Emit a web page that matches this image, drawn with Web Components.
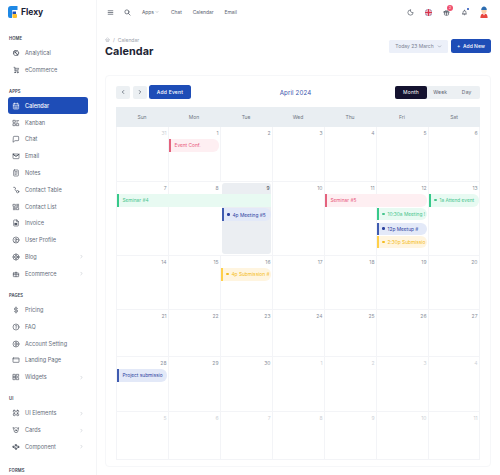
<!DOCTYPE html>
<html lang="en"><head><meta charset="utf-8"><title>Calendar</title>
<style>
html,body{margin:0;height:475px;overflow:hidden;background:#fff;font-family:Inter,"Noto Sans",sans-serif;color:#2a3547}
body{display:flex}
</style></head><body>
<app-sidebar></app-sidebar>
<app-main></app-main>
<script>
const I={
analytical:'<circle cx="12" cy="12" r="8"/><path d="M5 8c5 0 9 3 11 11M4 13c5-2 10-4 12-8M9 4.500c0 6 3 11 9 13"/>',
cart:'<path d="M6 4h3v11h10M9 7h11l-2 5H9"/><circle cx="9" cy="19" r="1.500"/><circle cx="17" cy="19" r="1.500"/>',
calendar:'<rect x="4" y="5" width="16" height="16" rx="2"/><path d="M16 3v4M8 3v4M4 11h16M8 15h8M8 18h8"/>',
kanban:'<path d="M4 4h6v6H4zM14 5l6 0M14 9h3M4 14h6v6H4zM14 14h6v6h-6z"/>',
chat:'<path d="M4 6a2 2 0 0 1 2-2h12a2 2 0 0 1 2 2v9a2 2 0 0 1-2 2H9l-5 4z"/>',
mail:'<rect x="3" y="6" width="18" height="14" rx="2"/><path d="M3 7l9 6 9-6" stroke-width="3"/>',
notes:'<rect x="5" y="3" width="14" height="18" rx="2"/><path d="M9 8h6M9 12h6M9 16h4"/>',
phone:'<path d="M5 4h4l2 5-2.500 1.500a11 11 0 0 0 5 5"/><circle cx="17" cy="17" r="3.500"/>',
list:'<path d="M4 4h6v6H4zM14 4h6M14 7h6M14 10h6M4 14h6M4 17h6M4 20h6M14 14h6v6h-6z"/>',
invoice:'<path d="M14 3H7a2 2 0 0 0-2 2v14a2 2 0 0 0 2 2h10a2 2 0 0 0 2-2V8z"/><path d="M14 3v5h5"/><path d="M9 13h6v4H9z" fill="currentColor"/>',
user:'<circle cx="12" cy="12" r="9"/><circle cx="12" cy="10.500" r="3"/><path d="M7 18.500c1-2.500 9-2.500 10 0"/>',
blog:'<circle cx="12" cy="12" r="9"/><circle cx="12" cy="12" r="4"/><path d="M3 12h5M16 12h5M12 3v5M12 16v5"/>',
bag:'<rect x="4" y="9" width="16" height="11" rx="1"/><path d="M4 14h16M12 9v11M9 9a3 3 0 1 1 6 0"/>',
dollar:'<path d="M17 8a3.500 3.500 0 0 0-3-2h-4a3 3 0 0 0 0 6h4a3 3 0 0 1 0 6h-4a3.500 3.500 0 0 1-3-2M12 3v18"/>',
faq:'<circle cx="12" cy="12" r="9"/><path d="M10 9a2.500 2.500 0 1 1 3.500 2.500c-1 .5-1.500 1-1.500 2.500M12 17v.01"/>',
account:'<circle cx="12" cy="12" r="9"/><circle cx="12" cy="12" r="3.500"/><path d="M12 5v3M12 16v3"/>',
landing:'<rect x="3" y="6" width="18" height="13" rx="1"/><path d="M3 9h18" stroke-width="1"/>',
widgets:'<path d="M4 4h6v16H4zM14 4h6v6h-6zM14 14h6v6h-6zM4 10h6M4 14h6"/>',
ui:'<rect x="4" y="4" width="6" height="6" rx="2"/><rect x="14" y="4" width="6" height="6" rx="2"/><rect x="4" y="14" width="6" height="6" rx="2"/><rect x="14" y="14" width="6" height="6" rx="2"/>',
cards:'<path d="M4 5l5 2 3-3 3 3 5-2-2 9a6 6 0 0 1-12 0z"/><circle cx="12" cy="13" r="2"/>',
component:'<path d="M12 4l3 3-3 3-3-3zM5 9l3 3-3 3-3-3zM19 9l3 3-3 3-3-3zM12 14l3 3-3 3-3-3z" fill="currentColor"/>',
menu:'<path d="M4 6h16M4 12h16M4 18h16"/>',
search:'<circle cx="10" cy="10" r="7"/><path d="M21 21l-6-6"/>',
moon:'<path d="M12 3a7 7 0 0 0 9 9 9 9 0 1 1-9-9"/>',
gift:'<rect x="3" y="9" width="18" height="4" rx="1"/><path d="M12 9v12M5 13v6a2 2 0 0 0 2 2h10a2 2 0 0 0 2-2v-6M8 9a2.500 2.500 0 1 1 4-3 2.500 2.500 0 1 1 4 3"/>',
bell:'<path d="M5 17h14a4 4 0 0 1-2-3v-3a5 5 0 0 0-10 0v3a4 4 0 0 1-2 3M10 17v1a2 2 0 0 0 4 0v-1M12 4v2"/>',
home:'<path d="M5 12H3l9-9 9 9h-2M5 12v7a2 2 0 0 0 2 2h10a2 2 0 0 0 2-2v-7"/><path d="M9 21v-6a2 2 0 0 1 2-2h2a2 2 0 0 1 2 2v6"/>',
right:'<path d="M9 6l6 6-6 6"/>',left:'<path d="M15 6l-6 6 6 6"/>',down:'<path d="M6 9l6 6 6-6"/>'
};
const svg=(n,s,w=1.8)=>`<svg width="${s}" height="${s}" viewBox="0 0 24 24" fill="none" stroke="currentColor" stroke-width="${w}" stroke-linecap="round" stroke-linejoin="round" style="display:block;flex:none">${I[n]}</svg>`;
class Base extends HTMLElement{
  connectedCallback(){ if(!this.shadowRoot){this.attachShadow({mode:'open'}).innerHTML=this.render();} }
}
customElements.define('nav-label',class extends Base{render(){return `<style>:host{display:flex;align-items:flex-end;height:19.400px;box-sizing:border-box;padding:0 0 2.500px 9px;font-size:4.200px;font-weight:600;letter-spacing:.1px;color:#3a4250;line-height:7px}</style><slot></slot>`}});
customElements.define('nav-item',class extends Base{render(){
  const ic=this.getAttribute('icon'),a=this.hasAttribute('active'),c=this.hasAttribute('chev');
  return `<style>:host{display:flex;align-items:center;height:16.800px;margin:0 8.500px 0 8px;border-radius:3px;padding:0 4px;box-sizing:border-box;font-size:5.600px;color:${a?'#fff':'#666e7a'};background:${a?'#1e4db7':'transparent'};font-weight:${a?500:400}}
  .i{width:8px;margin-right:5px;color:${a?'#fff':'#3f4754'};display:flex}.t{flex:1;white-space:nowrap}.c{color:#98a0ac}</style>
  <span class="i">${svg(ic,8)}</span><span class="t"><slot></slot></span>${c?`<span class="c">${svg('right',5)}</span>`:''}`}});
customElements.define('app-logo',class extends Base{render(){return `<style>:host{display:flex;align-items:center;gap:3px;height:25px;padding:0 0 2px 8px;box-sizing:border-box;font-size:8.500px;font-weight:700;color:#1a2236}</style>
  <svg width="10" height="12" viewBox="0 0 10 12"><path d="M0 3a3 3 0 0 1 3-3h6.500v4H5a1 1 0 0 0-1 1v7H2a2 2 0 0 1-2-2z" fill="#1e88e5"/><path d="M4.500 5.500H8v3H4.500z" fill="#1e4db7"/><rect x="4.500" y="8" width="4.500" height="4" rx="1" fill="#fbc02d"/></svg><slot></slot>`}});
customElements.define('app-sidebar',class extends Base{render(){
  const sec=[['HOME',[['analytical','Analytical'],['cart','eCommerce']]],
  ['APPS',[['calendar','Calendar',0,1],['kanban','Kanban'],['chat','Chat'],['mail','Email'],['notes','Notes'],['phone','Contact Table'],['list','Contact List'],['invoice','Invoice'],['user','User Profile'],['blog','Blog',1],['bag','Ecommerce',1]]],
  ['PAGES',[['dollar','Pricing'],['faq','FAQ'],['account','Account Setting'],['landing','Landing Page'],['widgets','Widgets',1]]],
  ['UI',[['ui','UI Elements',1],['cards','Cards',1],['component','Component',1]]],['FORMS',[]]];
  return `<style>:host{display:block;flex:none;width:96px;height:475px;overflow:hidden;background:#fff;border-right:1px solid #f4f5f7}nav-label:last-child{margin-top:2px}</style>
  <app-logo>Flexy</app-logo>`+sec.map(([l,it])=>`<nav-label>${l}</nav-label>`+it.map(([i,t,c,a])=>`<nav-item icon="${i}"${c?' chev':''}${a?' active':''}>${t}</nav-item>`).join('')).join('')}});
customElements.define('top-bar',class extends Base{render(){
  return `<style>:host{display:flex;align-items:center;height:26px;padding:0 12px 2px 10px;box-sizing:border-box;font-size:4.900px;color:#5a6270}
  .b{display:flex;color:#3a4250}.l{margin-right:11px;white-space:nowrap}.sp{flex:1}.r{position:relative;display:flex;color:#3a4250}
  .badge{position:absolute;top:-4px;right:-3px;width:6px;height:6px;border-radius:50%;background:#f0506e;color:#fff;font-size:3.500px;line-height:6px;text-align:center}
  .dot{position:absolute;top:-1px;right:-1px;width:2.500px;height:2.500px;border-radius:50%;background:#1e4db7}</style>
  <span class="b" style="margin-right:10px">${svg('menu',7,2.200)}</span><span class="b" style="margin-right:11px">${svg('search',7,2.200)}</span>
  <span class="l" style="display:flex;align-items:center;gap:1px;margin-right:12px">Apps ${svg('down',4)}</span><span class="l">Chat</span><span class="l">Calendar</span><span class="l">Email</span><span class="sp"></span>
  <span class="r" style="margin-right:11px">${svg('moon',7,2)}</span>
  <svg width="7" height="7" viewBox="0 0 14 14" style="margin-right:11px;display:block"><clipPath id="f"><circle cx="7" cy="7" r="7"/></clipPath><g clip-path="url(#f)"><rect width="14" height="14" fill="#3d4f8f"/><path d="M0 0l14 14M14 0L0 14" stroke="#fff" stroke-width="3"/><path d="M0 0l14 14M14 0L0 14" stroke="#d8324b" stroke-width="1.200"/><path d="M7 0v14M0 7h14" stroke="#fff" stroke-width="5"/><path d="M7 0v14M0 7h14" stroke="#d8324b" stroke-width="3"/></g></svg>
  <span class="r" style="margin-right:11px">${svg('gift',7,2)}<span class="badge">2</span></span>
  <span class="r" style="margin-right:12px">${svg('bell',7,2)}<span class="dot"></span></span>
  <svg width="8" height="12" viewBox="0 0 20 30" preserveAspectRatio="none" style="display:block"><path d="M1 30c0-9 4-11 9-11s9 2 9 11z" fill="#e8453c"/><path d="M7 19l3 5 3-5z" fill="#fff"/><circle cx="10" cy="12" r="6.500" fill="#fcd0a8"/><path d="M3 10c0-12 14-12 14 0z" fill="#2b6cb0"/></svg>`}});
customElements.define('page-head',class extends Base{render(){return `<style>:host{display:flex;align-items:flex-start;justify-content:space-between;padding:9px 9px 0 8px;height:49px;box-sizing:border-box}
  .bc{display:flex;align-items:center;gap:3px;font-size:5px;color:#9aa1ac;height:9px}
  h1{margin:0;font-size:10.800px;font-weight:700;line-height:15px;color:#1d2433;letter-spacing:.1px}
  .act{display:flex;gap:3px;padding-top:4px;align-items:flex-start}
  .d{display:flex;align-items:center;justify-content:center;gap:3px;width:59px;height:13px;margin-top:.5px;background:#ecf0f9;border-radius:1.500px;font-size:5px;color:#7a8292}
  .n{display:flex;align-items:center;justify-content:center;width:40px;height:14px;background:#1e4db7;border-radius:2.500px;font-size:5px;font-weight:500;color:#fff}</style>
  <div><div class="bc">${svg('home',5)}<span>/</span><span>Calendar</span></div><h1>Calendar</h1></div>
  <div class="act"><div class="d">Today 23 March ${svg('down',5,2.400)}</div><div class="n">+&nbsp; Add New</div></div>`}});
customElements.define('cal-toolbar',class extends Base{render(){return `<style>:host{display:flex;align-items:center;height:14px;margin-bottom:8px;font-size:5px}
  .g{display:flex;align-items:center;justify-content:center;height:13px;width:14px;background:#ecf0f3;border-radius:2px;color:#2a3547;margin-right:3px}
  .g+.g{margin-right:2px}.a{display:flex;align-items:center;justify-content:center;width:42px;height:14px;background:#1e4db7;border-radius:2.500px;color:#fff;font-weight:500;letter-spacing:.2px}
  .t{flex:1;text-align:center;font-size:6.200px;color:#3a55ad;padding-left:5px;letter-spacing:.1px}
  .v{display:flex;height:13px;background:#ecf0f3;border-radius:2px;color:#5a6270;letter-spacing:.2px}
  .v span{width:26.500px;display:flex;align-items:center;justify-content:center}.v .on{width:32px;background:#14122f;color:#fff;border-radius:2px}</style>
  <span class="g">${svg('left',6,2.400)}</span><span class="g">${svg('right',6,2.400)}</span><span class="a">Add Event</span>
  <span class="t">April 2024</span><span class="v"><span class="on">Month</span><span>Week</span><span>Day</span></span>`}});
customElements.define('cal-head',class extends Base{render(){return `<style>:host{display:grid;grid-template-columns:repeat(7,1fr);height:20px;background:#e9eef2;font-size:5px;color:#6f7783;align-items:center;text-align:center}</style>`+['Sun','Mon','Tue','Wed','Thu','Fri','Sat'].map(d=>`<span>${d}</span>`).join('')}});
const EC={green:['#e8faf2','#37c98a','#45c48c'],red:['#feeff2','#e4627d','#e8567a'],blue:['#e3e9f8','#3f5bb0','#2c429f'],yellow:['#fff5e0','#ffd04a','#f4bc20']};
customElements.define('cal-event',class extends Base{render(){
  const c=EC[this.getAttribute('color')],d=this.hasAttribute('dot'),s=this.getAttribute('span')||1,col=this.getAttribute('col'),row=this.getAttribute('row');
  return `<style>:host{display:flex;align-items:center;grid-column:${col}/span ${s};grid-row:${row};height:${this.getAttribute('h')||13}px;margin:0 1px 0 1px;box-sizing:border-box;background:${c[0]};border-left:2px solid ${c[1]};border-radius:0 6px 6px 0;color:${c[2]};font-size:4.800px;padding-left:${d?3:3.500}px;white-space:nowrap;overflow:hidden;z-index:1;min-width:0}
  i{width:2.500px;height:2.500px;border-radius:50%;background:${c[2]};flex:none;margin-right:3px}</style>${d?'<i></i>':''}<slot></slot>`}});
customElements.define('cal-week',class extends Base{render(){
  const nums=this.getAttribute('days').split(','),mute=(this.getAttribute('mute')||'').split(','),today=this.getAttribute('today');
  return `<style>:host{display:grid;grid-template-columns:repeat(7,1fr);grid-template-rows:10px repeat(3,auto) 1fr;row-gap:1.500px;height:${this.getAttribute('h')}px;border-bottom:1px solid #f3f4f7;box-sizing:border-box}
  .c{grid-row:1/-1;border-left:1px solid #f3f4f7;font-size:5px;color:#8a919c;text-align:right;padding:3px 1.500px 0 0;box-sizing:border-box;min-width:0}
  .c.m{color:#ccd0d6}.c:last-of-type{border-right:1px solid #f3f4f7}
  .c.t{background:#ebeef2;border-radius:3px;margin:1px 1px 1px 2px;padding-top:2px;color:#3a4250;border-left:0}</style>`+
  nums.map((n,i)=>`<div class="c${mute.includes(String(i))?' m':''}${today==i?' t':''}" style="grid-column:${i+1}">${n}</div>`).join('')+`<slot></slot>`}});
customElements.define('cal-card',class extends Base{render(){return `<style>:host{display:block;width:386px;height:392px;box-sizing:border-box;padding:9px 10px 0;border:1px solid #f6f7f9;border-radius:4px}</style>
  <cal-toolbar></cal-toolbar><cal-head></cal-head><slot></slot>`}});
customElements.define('app-main',class extends Base{render(){return `<style>:host{display:block;flex:1;min-width:0}
  .w{padding-left:8px}</style><top-bar></top-bar><page-head></page-head><div class="w">
  <cal-card>
   <cal-week h="55" days="31,1,2,3,4,5,6" mute="0"><cal-event col="2" row="2" color="red">Event Conf.</cal-event></cal-week>
   <cal-week h="74" days="7,8,9,10,11,12,13" today="2">
     <cal-event col="1" span="3" row="2" color="green" style="border-radius:0">Seminar #4</cal-event>
     <cal-event col="5" span="2" row="2" color="red">Seminar #5</cal-event>
     <cal-event col="7" row="2" color="green" dot>1a Attend event</cal-event>
     <cal-event col="3" row="3" color="blue" dot style="margin-left:2px">4p Meeting #5</cal-event>
     <cal-event col="6" row="3" color="green" dot h="12">10:30a Meeting !</cal-event>
     <cal-event col="6" row="4" color="blue" dot h="12">12p Meetup #</cal-event>
     <cal-event col="6" row="5" color="yellow" dot h="12">2:30p Submissio</cal-event>
   </cal-week>
   <cal-week h="54" days="14,15,16,17,18,19,20"><cal-event col="3" row="2" color="yellow" dot>4p Submission #</cal-event></cal-week>
   <cal-week h="47" days="21,22,23,24,25,26,27"></cal-week>
   <cal-week h="55" days="28,29,30,1,2,3,4" mute="3,4,5,6"><cal-event col="1" row="2" color="blue">Project submissio</cal-event></cal-week>
   <cal-week h="48" days="5,6,7,8,9,10,11" mute="0,1,2,3,4,5,6"></cal-week>
  </cal-card></div>`}});
</script>
</body></html>
